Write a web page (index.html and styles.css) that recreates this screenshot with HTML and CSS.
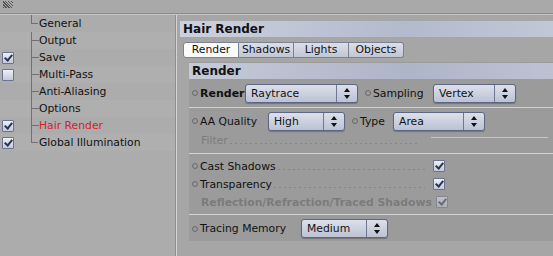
FILE: index.html
```html
<!DOCTYPE html>
<html lang="en">
<head>
  <meta charset="UTF-8">
  <title>Hair Render</title>
  <link rel="stylesheet" href="styles.css">
</head>
<body>

<div class="topbar"><span class="grip"></span></div>

<div class="main">
  <div class="sidebar">
    <ul class="tree">
      <li><span class="box-slot"></span><span class="branch"></span>General</li>
      <li><span class="box-slot"></span><span class="branch"></span>Output</li>
      <li><span class="box-slot"><span class="chk on"></span></span><span class="branch"></span>Save</li>
      <li><span class="box-slot"><span class="chk"></span></span><span class="branch"></span>Multi-Pass</li>
      <li><span class="box-slot"></span><span class="branch"></span>Anti-Aliasing</li>
      <li><span class="box-slot"></span><span class="branch"></span>Options</li>
      <li class="active"><span class="box-slot"><span class="chk on"></span></span><span class="branch"></span>Hair Render</li>
      <li class="last"><span class="box-slot"><span class="chk on"></span></span><span class="branch"></span>Global Illumination</li>
    </ul>
  </div>

  <div class="content">
    <div class="title-bar">Hair Render</div>
    <div class="tabs">
      <span class="tab current">Render</span>
      <span class="tab">Shadows</span>
      <span class="tab">Lights</span>
      <span class="tab">Objects</span>
    </div>

    <div class="panel">
      <div class="panel-head">Render</div>

      <div class="row r1">
        <span class="dot"></span><span class="lbl bold w-render">Render</span>
        <span class="select w-raytrace">Raytrace<span class="arrows"></span></span>
        <span class="dot"></span><span class="lbl w-sampling">Sampling</span>
        <span class="select w-vertex">Vertex<span class="arrows"></span></span>
      </div>
      <div class="sep first"></div>

      <div class="row r2">
        <span class="dot"></span><span class="lbl w-aa">AA Quality</span>
        <span class="select w-high">High<span class="arrows"></span></span>
        <span class="dot"></span><span class="lbl w-type">Type</span>
        <span class="select w-area">Area<span class="arrows"></span></span>
      </div>
      <div class="row r3">
        <span class="nodot"></span><span class="lbl dim">Filter</span>
        <span class="leader"></span>
        <span class="field-line"></span>
      </div>
      <div class="sep"></div>

      <div class="row r4">
        <span class="dot"></span><span class="lbl">Cast Shadows</span>
        <span class="leader"></span><span class="chk on"></span>
      </div>
      <div class="row r4">
        <span class="dot"></span><span class="lbl">Transparency</span>
        <span class="leader"></span><span class="chk on"></span>
      </div>
      <div class="row r4">
        <span class="nodot"></span><span class="lbl dim bold">Reflection/Refraction/Traced Shadows</span>
        <span class="leader none"></span><span class="chk on off"></span>
      </div>
      <div class="sep"></div>

      <div class="row r5">
        <span class="dot"></span><span class="lbl w-tracing">Tracing Memory</span>
        <span class="select w-medium">Medium<span class="arrows"></span></span>
      </div>
    </div>
  </div>
</div>

</body>
</html>
```

FILE: styles.css
```css
body {
  margin: 0;
  width: 553px;
  height: 256px;
  overflow: hidden;
  background-color: #a6a6a6;
  font-family: "DejaVu Sans", Verdana, sans-serif;
  font-size: 10.8px;
  color: #111;
}

.topbar {
  height: 12px;
  background-color: #a9a9a9;
  border-bottom: 1px solid #8c8c8c;
  box-shadow: 0 1px 0 #c4c4c4;
  padding: 1px 0 0 3px;
}
.grip {
  display: block;
  width: 10px;
  height: 7px;
  background-image: repeating-linear-gradient(45deg, #555 0 1px, transparent 1px 2px);
}

.main {
  display: flex;
  height: 242px;
  margin-top: 1px;
}

/* linke Spalte */
.sidebar {
  flex: none;
  width: 175px;
  background-color: #acacac;
  border-right: 1px solid #8e8e8e;
  box-shadow: 1px 0 0 #d4d4d4;
}
.tree {
  list-style: none;
  margin: 0;
  padding: 0;
}
.tree li {
  display: flex;
  align-items: center;
  height: 17px;
}
.tree li:nth-child(even) {
  background-color: #afafaf;
}
.tree li.active {
  color: #d6202a;
}
.box-slot {
  width: 31px;
  display: flex;
  align-items: center;
  padding-left: 2px;
  box-sizing: border-box;
}
.branch {
  width: 8px;
  height: 17px;
  border-left: 1px solid #707070;
  box-sizing: border-box;
  background: linear-gradient(#707070, #707070) no-repeat 0 8px / 7px 1px;
}
.tree li:first-child .branch {
  border-left: none;
  background: linear-gradient(#707070, #707070) no-repeat 0 8px / 7px 1px,
              linear-gradient(#707070, #707070) no-repeat 0 -2px / 1px 11px;
}
.tree li.last .branch {
  border-left: none;
  background: linear-gradient(#707070, #707070) no-repeat 0 8px / 7px 1px,
              linear-gradient(#707070, #707070) no-repeat 0 0 / 1px 9px;
}

.chk {
  display: inline-block;
  flex: none;
  width: 12px;
  height: 12px;
  box-sizing: border-box;
  border: 1px solid #6a7390;
  border-radius: 1px;
  background: linear-gradient(#eef0f6, #c3c9d9);
  position: relative;
}
.chk.on::after {
  content: "";
  position: absolute;
  left: 3px;
  top: 0;
  width: 3px;
  height: 6px;
  border-right: 2px solid #2b3550;
  border-bottom: 2px solid #2b3550;
  transform: rotate(40deg);
}
.chk.off {
  opacity: 0.45;
}

/* rechte Seite */
.content {
  flex: 1;
  min-width: 0;
  padding: 6px 0 0 4px;
}
.title-bar {
  height: 16px;
  line-height: 16px;
  padding-left: 3px;
  font-weight: bold;
  font-size: 12px;
  background: linear-gradient(90deg, #cdd1de, #b3bacd 60%, #c2c7d5);
}
.tabs {
  display: flex;
  margin: 5px 0 0 3px;
}
.tab {
  height: 14px;
  line-height: 14px;
  width: 54px;
  text-align: center;
  background: linear-gradient(#dcdfe8, #c1c6d4);
  border: 1px solid #7a8296;
  border-left: none;
}
.tab.current {
  background: #fbfbfb;
  border-left: 1px solid #7a8296;
  border-radius: 3px 0 0 3px;
}
.tab:last-child {
  border-radius: 0 3px 3px 0;
}

.panel {
  margin: 4px 0 0 9px;
  background-color: #9b9b9b;
  height: 178px;
  padding-top: 1px;
}
.panel-head {
  height: 16px;
  line-height: 16px;
  padding-left: 3px;
  font-weight: bold;
  font-size: 12px;
  background: linear-gradient(90deg, #c6cad8, #aeb5c8 60%, #bcc2d2);
}

.row {
  display: flex;
  align-items: center;
}
.r1 { height: 20px; margin-top: 4px; }
.r2 { height: 20px; }
.r3 { height: 19px; }
.r4 { height: 18px; }
.r5 { height: 21px; }

.sep {
  height: 1px;
  background-color: #d2d2d2;
  margin: 3px 0 3px;
}
.sep.first {
  margin-top: 4px;
}

.dot {
  flex: none;
  width: 4px;
  height: 4px;
  border: 1px solid #555;
  border-radius: 50%;
  margin: 0 2px 0 3px;
  opacity: 0.7;
}
.nodot {
  flex: none;
  width: 12px;
}
.lbl {
  white-space: nowrap;
}
.bold {
  font-weight: bold;
}
.dim {
  color: #7b7b7b;
}
.w-render { width: 45px; font-size: 11px; }
.w-sampling { width: 60px; }
.w-aa { width: 68px; }
.w-type { width: 33px; }
.w-tracing { width: 101px; }

.leader {
  flex: none;
  height: 1px;
  margin: 6px 8px 0 2px;
  background-image: repeating-linear-gradient(90deg, #858585 0 2px, transparent 2px 5px);
}
.r3 .leader { width: 189px; }
.r4 .leader { flex: 1; max-width: 234px; }
.r4 .leader.none { background: none; margin: 0 4px 0 0; }
.r4 .chk { margin-right: 108px; }
.field-line {
  width: 117px;
  height: 1px;
  background-color: #c6c6c6;
  margin: 0 0 6px 4px;
}

.select {
  flex: none;
  display: flex;
  align-items: center;
  height: 17px;
  padding-left: 5px;
  border: 1px solid #5d6682;
  border-radius: 3px;
  background: linear-gradient(#dde0ea, #bcc2d4);
  box-shadow: 0 1px 1px rgba(0, 0, 0, 0.25);
  position: relative;
  margin-right: 4px;
}
.arrows {
  position: absolute;
  right: 0;
  top: 0;
  bottom: 0;
  width: 20px;
  border-left: 1px solid #6f7893;
}
.arrows::before,
.arrows::after {
  content: "";
  position: absolute;
  left: 7px;
  border-left: 3px solid transparent;
  border-right: 3px solid transparent;
}
.arrows::before {
  top: 3px;
  border-bottom: 4px solid #111;
}
.arrows::after {
  bottom: 3px;
  border-top: 4px solid #111;
}

.w-raytrace { width: 106px; }
.w-vertex { width: 76px; }
.w-high { width: 70px; }
.w-area { width: 85px; }
.w-medium { width: 80px; }
```
